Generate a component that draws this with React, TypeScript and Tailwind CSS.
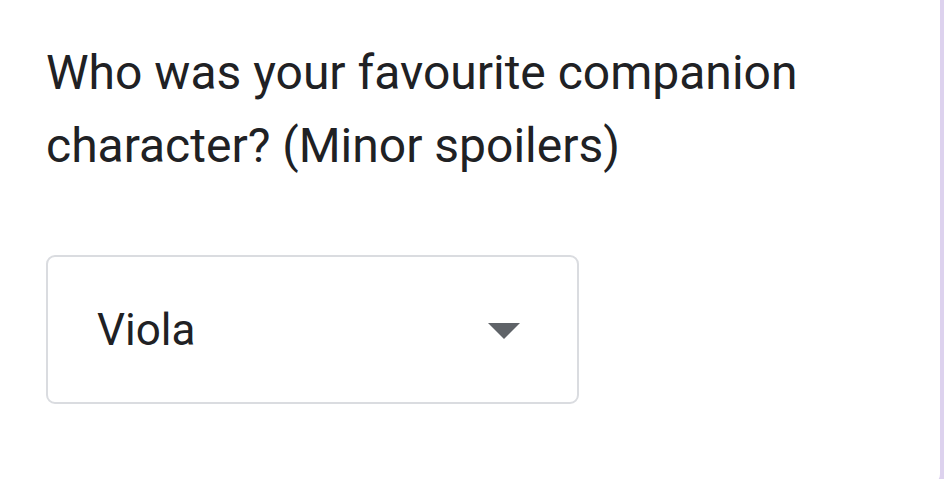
export default function App() {
  return (
    <div className="flex h-[479px] w-[944px] overflow-hidden bg-[#ddd2ee]">
      <div
        className="h-[484px] w-[940px] shrink-0 rounded-br-[10px] bg-white pl-[46px] pt-[36px]"
        style={{ fontFamily: "Roboto, 'Noto Sans', sans-serif" }}
      >
        <h1 className="text-[48px] leading-[73px] font-normal text-[#202124]">
          Who was your favourite companion
          <br />
          character? (Minor spoilers)
        </h1>
        <div className="mt-[73px] flex h-[149px] w-[533px] items-center justify-between rounded-[9px] border-2 border-[#dadce0] pl-[49px] pr-[57px]">
          <span className="text-[44px] text-[#202124]">Viola</span>
          <svg width="32" height="16" viewBox="0 0 32 16" className="mt-[2px]">
            <path d="M0 0 L32 0 L16 16 Z" fill="#5f6368" />
          </svg>
        </div>
      </div>
    </div>
  );
}
